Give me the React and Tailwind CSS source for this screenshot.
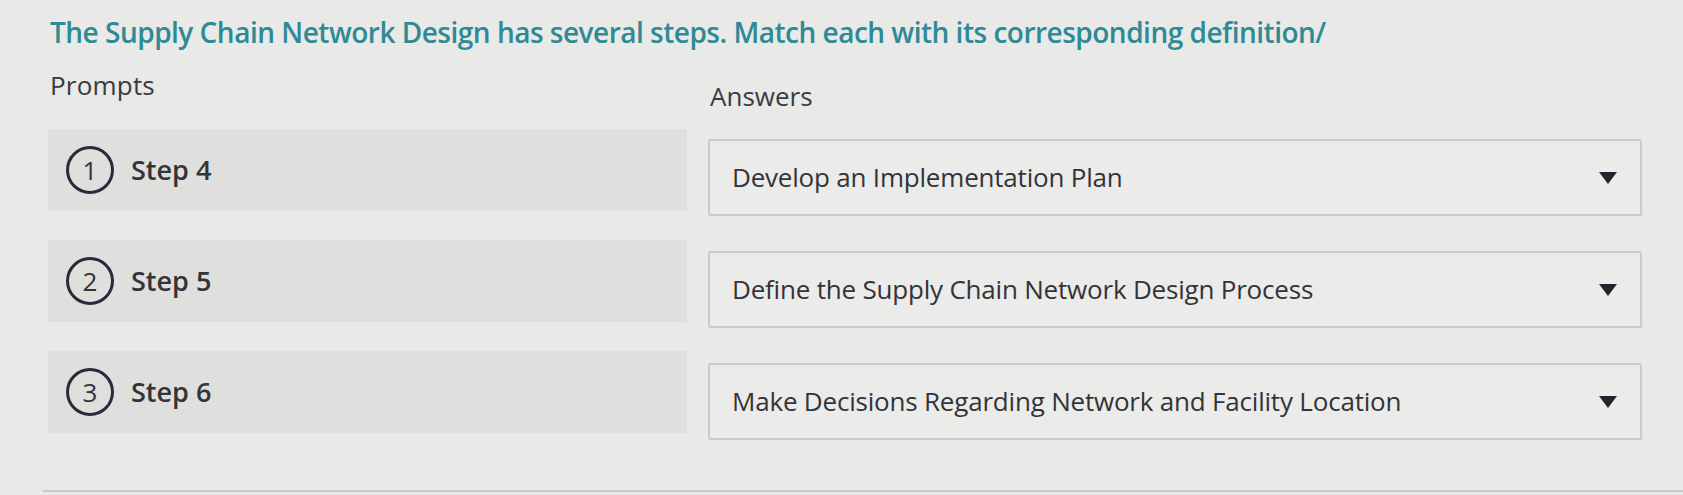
import React from "react";

const prompts = [
  { n: "1", label: "Step 4" },
  { n: "2", label: "Step 5" },
  { n: "3", label: "Step 6" },
];

const answers = [
  "Develop an Implementation Plan",
  "Define the Supply Chain Network Design Process",
  "Make Decisions Regarding Network and Facility Location",
];

function Caret() {
  return (
    <svg width="20" height="14" viewBox="0 0 20 14" className="shrink-0">
      <path d="M1 1 L19 1 L10 13 Z" fill="#23232b" />
    </svg>
  );
}

export default function App() {
  return (
    <div
      className="w-[1683px] h-[495px] bg-[#e9e9e7] overflow-hidden text-[#33333a]"
      style={{ fontFamily: '"Open Sans", "Noto Sans", sans-serif' }}
    >
      <div className="pl-[50px] pt-[12px]">
        <h1 className="text-[28px] leading-[40px] font-semibold text-[#2e8a95] tracking-[-0.5px]">
          The Supply Chain Network Design has several steps. Match each with its corresponding definition/
        </h1>
      </div>
      <div className="flex pl-[48px] gap-[21px] mt-[16px]">
        <div className="w-[639px] flex flex-col">
          <div className="pl-[2px] text-[26px] leading-[34px] text-[#3a3a40] tracking-[0.2px]">Prompts</div>
          <div className="flex flex-col gap-[29px] mt-[27px]">
            {prompts.map((p) => (
              <div key={p.n} className="h-[82px] bg-[#dfdfdd] flex items-center pl-[18px]">
                <div className="w-[48px] h-[48px] rounded-full border-[3px] border-[#2b2a3c] flex items-center justify-center text-[26px] font-medium text-[#33333a]">
                  {p.n}
                </div>
                <span className="ml-[17px] text-[27px] font-semibold text-[#33333a] tracking-[0px]">{p.label}</span>
              </div>
            ))}
          </div>
        </div>
        <div className="w-[934px] flex flex-col pt-[11px]">
          <div className="pl-[2px] text-[26px] leading-[34px] text-[#3a3a40] tracking-[0px]">Answers</div>
          <div className="flex flex-col gap-[35px] mt-[26px]">
            {answers.map((a) => (
              <div
                key={a}
                className="h-[77px] border-2 border-[#cbcbc9] rounded-[2px] bg-[#ebebe9] flex items-center justify-between pl-[22px] pr-[22px]"
              >
                <span className="text-[26px] text-[#33333a] tracking-[-0.2px]">{a}</span>
                <Caret />
              </div>
            ))}
          </div>
        </div>
      </div>
      <div className="ml-[43px] mt-[50px] h-[2px] bg-[#c9c9c7]" />
    </div>
  );
}
